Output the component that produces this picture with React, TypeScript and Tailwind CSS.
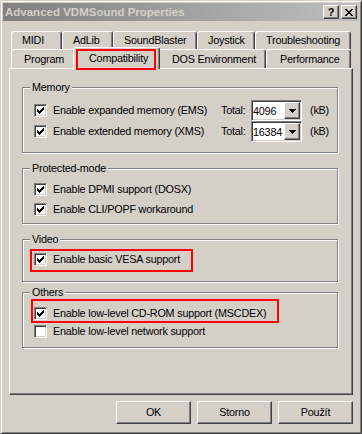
import React from 'react';

const raised =
  'border border-t-white border-l-white border-r-[#404040] border-b-[#404040] shadow-[inset_-1px_-1px_#808080]';
const sunken =
  'border border-t-[#808080] border-l-[#808080] border-r-white border-b-white shadow-[inset_1px_1px_#404040,inset_-1px_-1px_#d4d0c8]';

const Check = ({ on }: { on?: boolean }) => (
  <span className={`w-[13px] h-[13px] shrink-0 bg-white flex items-center justify-center ${sunken}`}>
    {on && (
      <svg width="7" height="7" viewBox="0 0 7 7" shapeRendering="crispEdges">
        <path
          d="M0 2h1v3H0z M1 3h1v3H1z M2 4h1v3H2z M3 3h1v3H3z M4 2h1v3H4z M5 1h1v3H5z M6 0h1v3H6z"
          fill="#000"
        />
      </svg>
    )}
  </span>
);

const Option = ({ on, label, height }: { on?: boolean; label: string; height: string }) => (
  <div className={`flex items-center pl-[11px] ${height}`}>
    <Check on={on} />
    <span className="ml-[6px] whitespace-nowrap">{label}</span>
  </div>
);

const Combo = ({ value }: { value: string }) => (
  <div className={`w-[51px] h-[21px] bg-white flex items-center ${sunken}`}>
    <span className="flex-1 pl-[1px] pt-[1px] overflow-hidden">{value}</span>
    <span className={`w-[16px] h-[17px] mr-[1px] shrink-0 bg-[#d4d0c8] flex items-center justify-center ${raised}`}>
      <svg width="7" height="4" viewBox="0 0 7 4" shapeRendering="crispEdges">
        <path d="M0 0h7v1H0z M1 1h5v1H1z M2 2h3v1H2z M3 3h1v1H3z" fill="#000" />
      </svg>
    </span>
  </div>
);

const Group = ({
  label,
  className,
  children,
}: {
  label: string;
  className: string;
  children: React.ReactNode;
}) => (
  <div className={`relative w-[316px] border border-[#808080] shadow-[inset_1px_1px_#fff,1px_1px_#fff] ${className}`}>
    <span className="absolute left-[7px] top-[-7px] px-[2px] bg-[#d4d0c8] leading-[13px]">{label}</span>
    {children}
  </div>
);

const tabBase =
  'h-full flex items-center border-t border-l border-white border-r border-r-[#404040] rounded-t-[3px] shadow-[inset_-1px_0_#808080] whitespace-nowrap';

const row1 = [
  { label: 'MIDI', w: 'w-[51px]' },
  { label: 'AdLib', w: 'w-[51px]' },
  { label: 'SoundBlaster', w: 'w-[84px]' },
  { label: 'Joystick', w: 'w-[58px]' },
  { label: 'Troubleshooting', w: 'w-[96px]' },
];

const BottomButton = ({ label }: { label: string }) => (
  <button className={`w-[75px] h-[23px] flex items-center justify-center bg-[#d4d0c8] ${raised}`}>{label}</button>
);

export default function App() {
  return (
    <div className="w-[362px] h-[434px] bg-[#d4d0c8] text-black font-['Liberation_Sans',Arial,sans-serif] text-[10.8px] tracking-[-0.2px] leading-[13px] border border-t-[#d4d0c8] border-l-[#d4d0c8] border-r-[#404040] border-b-[#404040] shadow-[inset_1px_1px_#fff,inset_-1px_-1px_#808080] p-[2px] flex flex-col">
      {/* caption */}
      <div className="h-[18px] bg-linear-to-r from-[#808080] to-[#c0c0c0] flex items-center justify-between pl-[2px] pr-[2px]">
        <span className="font-bold text-[11.5px] tracking-normal text-[#d4d0c8] whitespace-nowrap">Advanced VDMSound Properties</span>
        <div className="flex gap-[2px]">
          <span className={`w-[16px] h-[14px] bg-[#d4d0c8] flex items-center justify-center font-bold text-[11px] leading-none ${raised}`}>
            ?
          </span>
          <span className={`w-[16px] h-[14px] bg-[#d4d0c8] flex items-center justify-center ${raised}`}>
            <svg width="8" height="7" viewBox="0 0 8 7" shapeRendering="crispEdges">
              <path
                d="M0 0h2v1H0z M6 0h2v1H6z M1 1h2v1H1z M5 1h2v1H5z M2 2h4v1H2z M3 3h2v1H3z M2 4h4v1H2z M1 5h2v1H1z M5 5h2v1H5z M0 6h2v1H0z M6 6h2v1H6z"
                fill="#000"
              />
            </svg>
          </span>
        </div>
      </div>

      <div className="px-[6px] pt-[10px] flex flex-col">
        {/* tabs */}
        <div className="mx-[2px] h-[18px] flex">
          {row1.map((t) => (
            <div key={t.label} className={`${t.w} pl-[10px] ${tabBase}`}>
              {t.label}
            </div>
          ))}
        </div>
        <div className="mx-[2px] h-[19px] flex items-start">
          <div className={`w-[64px] pl-[12px] ${tabBase}`}>Program</div>
          <div className="relative z-10 -mx-[2px] -mt-[2px] w-[87px] h-[22px] bg-[#d4d0c8] pl-[15px] flex items-center border-t border-l border-white border-r border-r-[#404040] rounded-t-[3px] shadow-[inset_-1px_0_#808080] whitespace-nowrap">
            Compatibility
            <span className="absolute left-[2px] top-[1px] w-[80px] h-[21px] border-2 border-[#ff0000]" />
          </div>
          <div className={`w-[108px] pl-[13px] ${tabBase}`}>DOS Environment</div>
          <div className={`w-[85px] pl-[13px] ${tabBase}`}>Performance</div>
        </div>

        {/* page */}
        <div className="h-[327px] border border-t-white border-l-white border-r-[#404040] border-b-[#404040] shadow-[inset_-1px_-1px_#808080] pt-[18px] pl-[12px] flex flex-col">
          <Group label="Memory" className="h-[66px] pt-[12px]">
            {[
              { label: 'Enable expanded memory (EMS)', value: '4096' },
              { label: 'Enable extended memory (XMS)', value: '16384' },
            ].map((r) => (
              <div key={r.label} className="h-[21px] flex items-center pl-[11px]">
                <Check on />
                <span className="ml-[6px] w-[168px] whitespace-nowrap">{r.label}</span>
                <span className="w-[30px]">Total:</span>
                <Combo value={r.value} />
                <span className="ml-[8px]">(kB)</span>
              </div>
            ))}
          </Group>

          <Group label="Protected-mode" className="mt-[15px] h-[56px] pt-[10px]">
            <Option on label="Enable DPMI support (DOSX)" height="h-[20px]" />
            <Option on label="Enable CLI/POPF workaround" height="h-[20px]" />
          </Group>

          <Group label="Video" className="mt-[15px] h-[43px] pt-[9px]">
            <Option on label="Enable basic VESA support" height="h-[20px]" />
            <span className="absolute left-[7px] top-[9px] w-[163px] h-[23px] border-2 border-[#ff0000]" />
          </Group>

          <Group label="Others" className="mt-[10px] h-[56px] pt-[11px]">
            <Option on label="Enable low-level CD-ROM support (MSCDEX)" height="h-[18px]" />
            <Option label="Enable low-level network support" height="h-[18px]" />
            <span className="absolute left-[8px] top-[6px] w-[248px] h-[24px] border-2 border-[#ff0000]" />
          </Group>
        </div>

        {/* buttons */}
        <div className="mt-[6px] flex justify-end gap-[6px]">
          <BottomButton label="OK" />
          <BottomButton label="Storno" />
          <BottomButton label="Použít" />
        </div>
      </div>
    </div>
  );
}
